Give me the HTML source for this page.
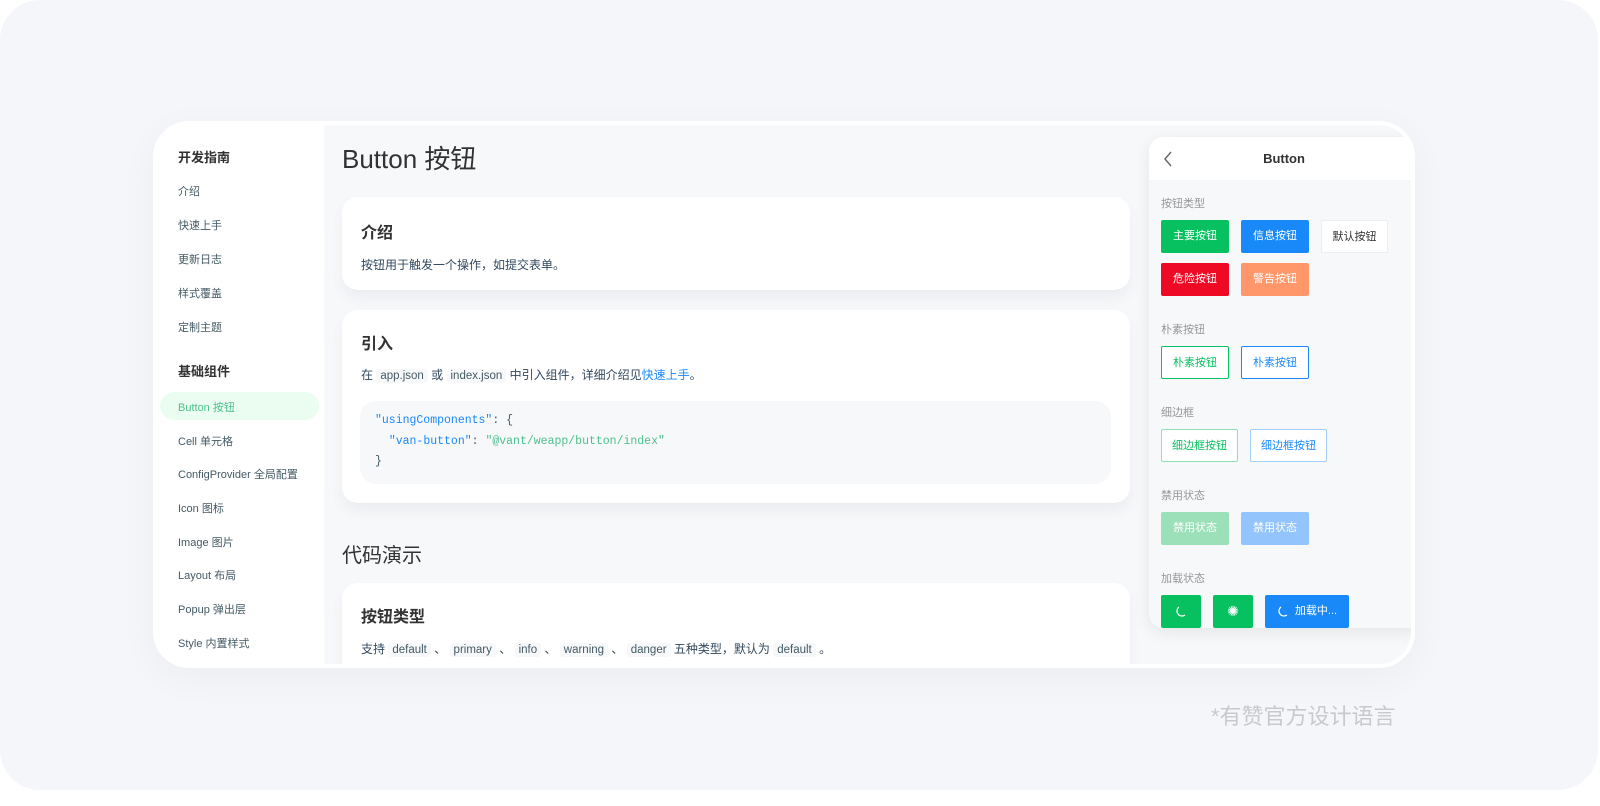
<!DOCTYPE html>
<html><head><meta charset="utf-8"><style>
*{margin:0;padding:0;box-sizing:border-box}
body{width:1600px;height:806px;background:#fff;font-family:"Liberation Sans","Noto Sans CJK SC",sans-serif;position:relative;overflow:hidden}
.bg{position:absolute;left:0;top:0;width:1598px;height:790px;background:#f5f6fa;border-radius:40px}
.frame{position:absolute;left:153px;top:121px;width:1262px;height:547px;background:#fff;border-radius:36px;padding:4px;box-shadow:0 10px 40px rgba(0,0,0,.04)}
.inner{position:relative;width:100%;height:100%;border-radius:32px;overflow:hidden;background:#f7f8fa}
.side{position:absolute;left:0;top:0;width:167px;height:100%;background:#fff}
.abs{position:absolute;white-space:nowrap}
.sh{font-size:13px;font-weight:bold;color:#323233;left:21px}
.si{font-size:11px;color:#455a64;left:21px}
.act{position:absolute;left:3px;top:267px;width:159px;height:28px;border-radius:14px;background:#ebfdf0}
.card{position:absolute;background:#fff;border-radius:16px;box-shadow:0 8px 12px #ebedf0}
.h3{font-size:16px;color:#323233;font-weight:bold}
.p{font-size:12px;color:#34495e}
code{font-family:"Liberation Sans",sans-serif;font-size:11.5px;background:#f7f8fa;padding:1px 4px;border-radius:3px;color:#455a64}
.code{position:absolute;left:18px;top:91px;width:751px;height:83px;background:#f7f8fa;border-radius:16px;font-family:"Liberation Mono",monospace;font-size:11.5px;line-height:20.5px;padding:10px 15px;color:#455a64;white-space:pre}
.k{color:#1989fa}.s{color:#4fc08d}
.phone{position:absolute;left:992px;top:12px;width:270px;height:491px;background:#f7f8fa;border-radius:14px 0 0 14px;box-shadow:0 4px 16px rgba(0,0,0,.08);overflow:hidden}
.ph{height:43px;background:#fff;text-align:center;line-height:43px;font-size:13px;font-weight:bold;color:#323233;position:relative}
.lbl{font-size:11px;color:#969799;left:12px}
.b{position:absolute;height:33px;font-size:11px;line-height:33px;text-align:center;border-radius:2px;color:#fff}
</style></head><body>
<div class="bg"></div>
<div class="abs" style="left:1211px;top:699px;font-size:22px;color:#c8c9cc">*有赞官方设计语言</div>
<div class="frame"><div class="inner">
<div class="side">
<div class="abs sh" style="top:22px">开发指南</div>
<div class="abs si" style="top:58px">介绍</div>
<div class="abs si" style="top:92px">快速上手</div>
<div class="abs si" style="top:126px">更新日志</div>
<div class="abs si" style="top:160px">样式覆盖</div>
<div class="abs si" style="top:194px">定制主题</div>
<div class="abs sh" style="top:236px">基础组件</div>
<div class="act"></div>
<div class="abs si" style="top:274px;color:#4fc08d">Button 按钮</div>
<div class="abs si" style="top:308px">Cell 单元格</div>
<div class="abs si" style="top:341px">ConfigProvider 全局配置</div>
<div class="abs si" style="top:375px">Icon 图标</div>
<div class="abs si" style="top:409px">Image 图片</div>
<div class="abs si" style="top:442px">Layout 布局</div>
<div class="abs si" style="top:476px">Popup 弹出层</div>
<div class="abs si" style="top:510px">Style 内置样式</div>
</div>
<div class="abs" style="left:185px;top:14px;font-size:26px;color:#323233">Button 按钮</div>
<div class="card" style="left:185px;top:72px;width:788px;height:93px">
<div class="abs h3" style="left:19px;top:22px">介绍</div>
<div class="abs p" style="left:19px;top:59px">按钮用于触发一个操作，如提交表单。</div>
</div>
<div class="card" style="left:185px;top:185px;width:788px;height:193px">
<div class="abs h3" style="left:19px;top:20px">引入</div>
<div class="abs p" style="left:19px;top:56px">在 <code>app.json</code> 或 <code>index.json</code> 中引入组件，详细介绍见<span style="color:#1989fa">快速上手</span>。</div>
<div class="code"><span class="k">"usingComponents"</span>: {
  <span class="k">"van-button"</span>: <span class="s">"@vant/weapp/button/index"</span>
}</div>
</div>
<div class="abs" style="left:185px;top:414px;font-size:20px;color:#323233">代码演示</div>
<div class="card" style="left:185px;top:458px;width:788px;height:120px">
<div class="abs h3" style="left:19px;top:20px">按钮类型</div>
<div class="abs p" style="left:19px;top:57px">支持 <code>default</code> 、 <code>primary</code> 、 <code>info</code> 、 <code>warning</code> 、 <code>danger</code> 五种类型，默认为 <code>default</code> 。</div>
</div>
<div class="phone">
<div class="ph"><svg style="position:absolute;left:14px;top:14px" width="10" height="16" viewBox="0 0 10 16"><path d="M8 1L2 8l6 7" fill="none" stroke="#646566" stroke-width="1.4"/></svg>Button</div>
<div class="abs lbl" style="top:58px">按钮类型</div>
<div class="b" style="left:12px;top:83px;width:68px;background:#07c160">主要按钮</div>
<div class="b" style="left:92px;top:83px;width:68px;background:#1989fa">信息按钮</div>
<div class="b" style="left:172px;top:83px;width:67px;background:#fff;color:#323233;border:1px solid #ebedf0">默认按钮</div>
<div class="b" style="left:12px;top:126px;width:68px;background:#ee0a24">危险按钮</div>
<div class="b" style="left:92px;top:126px;width:68px;background:#ff976a">警告按钮</div>
<div class="abs lbl" style="top:184px">朴素按钮</div>
<div class="b" style="left:12px;top:209px;width:68px;background:#fff;color:#07c160;border:1px solid #07c160">朴素按钮</div>
<div class="b" style="left:92px;top:209px;width:68px;background:#fff;color:#1989fa;border:1px solid #1989fa">朴素按钮</div>
<div class="abs lbl" style="top:267px">细边框</div>
<div class="b" style="left:12px;top:292px;width:77px;background:#fff;color:#07c160;border:1px solid #8fe0b5">细边框按钮</div>
<div class="b" style="left:101px;top:292px;width:77px;background:#fff;color:#1989fa;border:1px solid #a3cffb">细边框按钮</div>
<div class="abs lbl" style="top:350px">禁用状态</div>
<div class="b" style="left:12px;top:375px;width:68px;background:#9be0b9">禁用状态</div>
<div class="b" style="left:92px;top:375px;width:68px;background:#93c4fc">禁用状态</div>
<div class="abs lbl" style="top:433px">加载状态</div>
<div class="b" style="left:12px;top:458px;width:40px;background:#07c160"><svg width="12" height="12" viewBox="0 0 12 12" style="vertical-align:middle"><path d="M4 2A5 5 0 0 0 10 10" fill="none" stroke="#fff" stroke-width="1.2"/></svg></div>
<div class="b" style="left:64px;top:458px;width:40px;background:#07c160;font-size:14px">✺</div>
<div class="b" style="left:116px;top:458px;width:84px;background:#1989fa"><svg width="12" height="12" viewBox="0 0 12 12" style="vertical-align:middle;margin-right:6px"><path d="M4 2A5 5 0 0 0 10 10" fill="none" stroke="#fff" stroke-width="1.2"/></svg>加载中...</div>
</div>
</div></div>
</body></html>
